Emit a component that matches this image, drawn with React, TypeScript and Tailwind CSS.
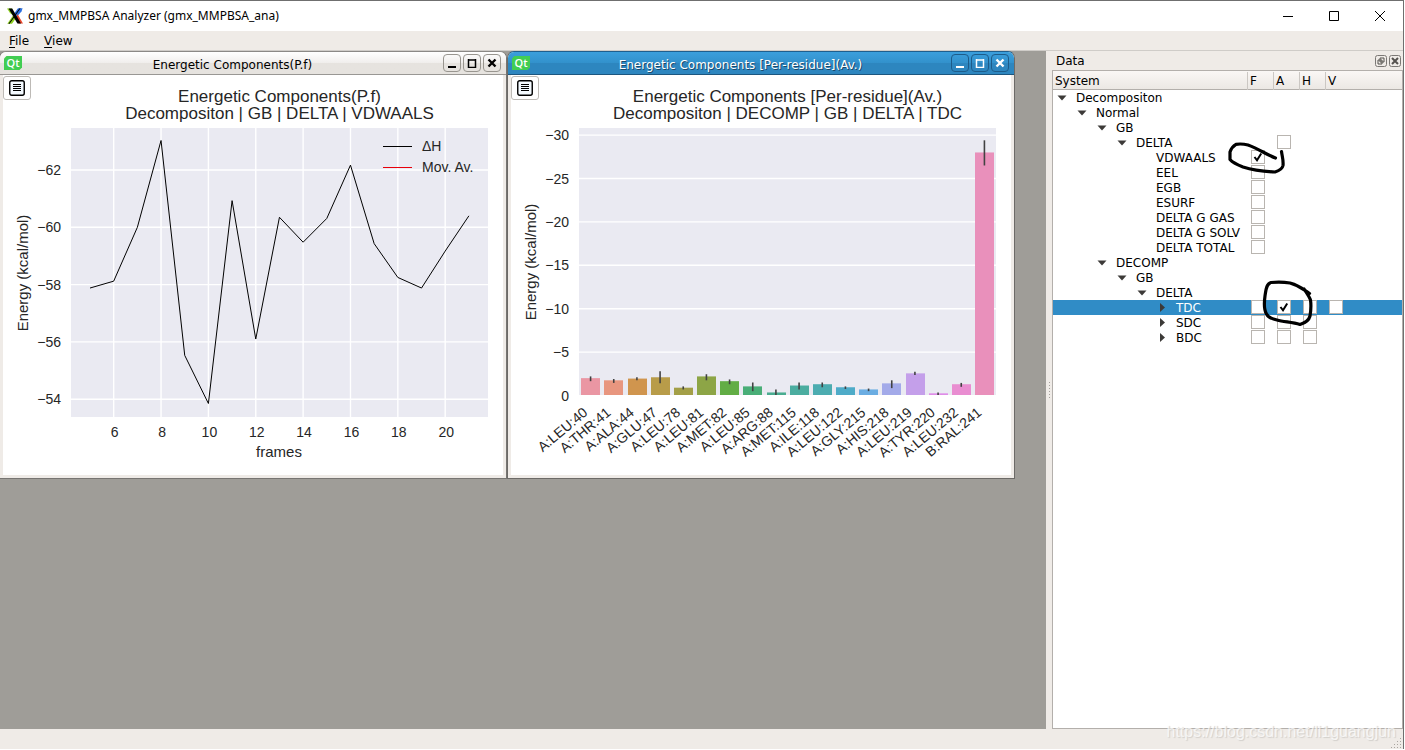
import React from 'react';

interface TreeRow {
  label: string;
  level: number;
  state: 'open' | 'closed' | 'leaf';
  checks: string;
  checked?: string;
  selected?: boolean;
}

interface ResidueBar {
  name: string;
  value: number;
  low: number;
  high: number;
  color: string;
}

const COLUMNS = ['F', 'A', 'H', 'V'];

const TREE_ROWS: TreeRow[] = [
  { label: 'Decompositon', level: 0, state: 'open', checks: '' },
  { label: 'Normal', level: 1, state: 'open', checks: '' },
  { label: 'GB', level: 2, state: 'open', checks: '' },
  { label: 'DELTA', level: 3, state: 'open', checks: 'A' },
  { label: 'VDWAALS', level: 4, state: 'leaf', checks: 'F', checked: 'F' },
  { label: 'EEL', level: 4, state: 'leaf', checks: 'F' },
  { label: 'EGB', level: 4, state: 'leaf', checks: 'F' },
  { label: 'ESURF', level: 4, state: 'leaf', checks: 'F' },
  { label: 'DELTA G GAS', level: 4, state: 'leaf', checks: 'F' },
  { label: 'DELTA G SOLV', level: 4, state: 'leaf', checks: 'F' },
  { label: 'DELTA TOTAL', level: 4, state: 'leaf', checks: 'F' },
  { label: 'DECOMP', level: 2, state: 'open', checks: '' },
  { label: 'GB', level: 3, state: 'open', checks: '' },
  { label: 'DELTA', level: 4, state: 'open', checks: '' },
  { label: 'TDC', level: 5, state: 'closed', checks: 'FAHV', checked: 'A', selected: true },
  { label: 'SDC', level: 5, state: 'closed', checks: 'FAH' },
  { label: 'BDC', level: 5, state: 'closed', checks: 'FAH' },
];

const INDENT = ['pl-[4px]', 'pl-[24px]', 'pl-[44px]', 'pl-[64px]', 'pl-[84px]', 'pl-[104px]'];

// Energy per frame, starting at frame 5
const FRAME_START = 5;
const ENERGIES = [
  -57.88, -58.12, -60.0, -63.03, -55.53, -53.85, -60.93, -56.1, -60.35,
  -59.48, -60.31, -62.17, -59.43, -58.25, -57.88, -59.17, -60.4,
];

const RESIDUES: ResidueBar[] = [
  { name: 'A:LEU:40', value: 2.0, low: 1.65, high: 2.2, color: '#ea96a3' },
  { name: 'A:THR:41', value: 1.75, low: 1.45, high: 1.9, color: '#e8967f' },
  { name: 'A:ALA:44', value: 1.95, low: 1.75, high: 2.1, color: '#d0954e' },
  { name: 'A:GLU:47', value: 2.1, low: 1.4, high: 2.8, color: '#b89c49' },
  { name: 'A:LEU:78', value: 0.9, low: 0.7, high: 1.05, color: '#a39f47' },
  { name: 'A:LEU:81', value: 2.2, low: 1.75, high: 2.45, color: '#8da546' },
  { name: 'A:MET:82', value: 1.65, low: 1.3, high: 1.85, color: '#62ad45' },
  { name: 'A:LEU:85', value: 1.05, low: 0.5, high: 1.5, color: '#49ae77' },
  { name: 'A:ARG:88', value: 0.35, low: 0.05, high: 0.7, color: '#4aad91' },
  { name: 'A:MET:115', value: 1.15, low: 0.7, high: 1.5, color: '#4bada0' },
  { name: 'A:ILE:118', value: 1.3, low: 0.95, high: 1.5, color: '#4cacb0' },
  { name: 'A:LEU:122', value: 0.95, low: 0.75, high: 1.05, color: '#4eabc8' },
  { name: 'A:GLY:215', value: 0.7, low: 0.5, high: 0.8, color: '#6bade2' },
  { name: 'A:HIS:218', value: 1.4, low: 0.85, high: 1.75, color: '#a3aae9' },
  { name: 'A:LEU:219', value: 2.55, low: 2.35, high: 2.75, color: '#c49fea' },
  { name: 'A:TYR:220', value: 0.25, low: 0.05, high: 0.35, color: '#df8de8' },
  { name: 'A:LEU:232', value: 1.3, low: 1.0, high: 1.45, color: '#e98dd1' },
  { name: 'B:RAL:241', value: 28.0, low: 26.5, high: 29.4, color: '#e990bb' },
];

const frameX = (frame: number) => 87 + (frame - FRAME_START) * 23.68;
const energyY = (energy: number) => 95 + (energy + 62) * 28.65;
const residueY = (value: number) => 320.5 - value * 8.68;

const XLogo = () => (
  <svg viewBox="0 0 16 16" className="h-4 w-4" aria-hidden="true">
    <path d="M0 0.5h5L7 8 3 5z" fill="#8ed11f" />
    <path d="M15.600 0.300h-4.600L7.500 5l2.500 3.500 4.500-5z" fill="#2b6fe0" />
    <path d="M9 10l1.500-4L16 15.500h-4.500z" fill="#e8452a" />
    <path d="M0.300 15.700h4.700l3.500-5L6 7.600z" fill="#8ed11f" />
    <path d="M1.600 0.400h3.600l8.800 15.200h-3.600z" fill="#000" />
    <path d="M13.600 0.300h-1L1.400 15.700h1.200z" fill="#000" />
  </svg>
);

const QtLogo = () => (
  <svg viewBox="0 0 18 14" className="h-[14px] w-[18px] shrink-0" aria-hidden="true">
    <path d="M2.5 0H18v11.5L15.5 14H0V2.5z" fill="#41cd52" />
    <text x="9" y="11" textAnchor="middle" fontSize="11" fontWeight="600" fill="#fff" fontFamily="Open Sans, sans-serif">
      Qt
    </text>
  </svg>
);

const TitleBar = () => (
  <header className="flex h-[30px] shrink-0 items-center bg-white">
    <div className="flex flex-1 items-center gap-[5px] pl-[7px]">
      <XLogo />
      <h1 className="font-['Noto_Sans',sans-serif] text-[12px] leading-4">
        gmx_MMPBSA Analyzer (gmx_MMPBSA_ana)
      </h1>
    </div>
    {[
      { label: 'Minimize', d: 'M0 5.5h10' },
      { label: 'Maximize', d: 'M0.5 0.5h9v9h-9z' },
      { label: 'Close', d: 'M0 0l10 10M10 0L0 10' },
    ].map((item) => (
      <button key={item.label} aria-label={item.label} className="flex h-full w-[46px] items-center justify-center">
        <svg viewBox="0 0 10 10" className="h-[10px] w-[10px]" fill="none" stroke="#000">
          <path d={item.d} />
        </svg>
      </button>
    ))}
  </header>
);

const MenuBar = () => (
  <nav className="flex h-5 shrink-0 items-center gap-[15px] border-b border-[#cfccc8] bg-[#efebe7] pl-[9px] text-[12px]">
    <button>
      <span className="underline underline-offset-2">F</span>ile
    </button>
    <button>
      <span className="underline underline-offset-2">V</span>iew
    </button>
  </nav>
);

interface SubWindowProps {
  title: string;
  active?: boolean;
  className: string;
  children: React.ReactNode;
}

const SubWindow: React.FC<SubWindowProps> = ({ title, active, className, children }) => (
  <section
    className={`absolute top-0 w-[508px] rounded-t-[7px] border bg-[#efebe7] ${
      active ? 'border-[#6c6a67] border-t-[#1f5f8e]' : 'border-[#777572] border-t-[#8b8986]'
    } ${className}`}
  >
    <div
      className={`flex h-[23px] items-center rounded-t-[6px] border-b pr-[5px] pl-1 ${
        active
          ? 'border-[#1c567f] bg-linear-to-b from-[#3b9fdc] from-0% via-[#3291cc] via-50% to-[#2d86bf] to-50% text-white'
          : 'border-[#999794] bg-linear-to-b from-[#ffffff] from-0% via-[#f0eeec] via-50% to-[#e6e3df] to-50% text-black'
      }`}
    >
      <QtLogo />
      <h2
        className={`flex-1 pt-1 text-center text-[12px] leading-4 ${
          active ? '[text-shadow:1px_1px_0_#1c4a6b]' : ''
        }`}
      >
        {title}
      </h2>
      <div className="flex gap-[2px]">
        {[
          { label: 'Minimize window', d: 'M1 9h8', width: 2 },
          { label: 'Maximize window', d: 'M1.5 1v8.5h7V1M1 2h8', width: 1.5 },
          { label: 'Close window', d: 'M1.5 1.5l7 7M8.5 1.5l-7 7', width: 2.4 },
        ].map((item) => (
          <button
            key={item.label}
            aria-label={item.label}
            className={`flex h-[18px] w-[18px] items-center justify-center rounded-[4px] border ${
              active ? 'border-[#1d5c8a]' : 'border-[#98958f]'
            }`}
          >
            <svg viewBox="0 0 10 10" className="h-[10px] w-[10px]" fill="none" stroke="currentColor" strokeWidth={item.width}>
              <path d={item.d} />
            </svg>
          </button>
        ))}
      </div>
    </div>
    <div className="relative mx-[3px] mb-[3px] bg-white">
      <button
        aria-label="Chart options"
        className="absolute top-px left-0 flex h-6 w-7 items-center justify-center rounded-[3px] border border-[#bdbab6] bg-white"
      >
        <svg viewBox="0 0 16 16" className="h-4 w-4">
          <rect x="0.75" y="0.75" width="14.5" height="14.5" rx="2" fill="#f4faff" stroke="#000" strokeWidth="1.4" />
          <path d="M4 4.5h8M4 6.5h8M4 8.5h8M4 10.5h8" stroke="#000" strokeWidth="1.2" />
        </svg>
      </button>
      {children}
    </div>
  </section>
);

const chartClass = "block w-full font-['Liberation_Sans',Arial,sans-serif]";

const ChartTitle = ({ lines }: { lines: string[] }) => (
  <g fontSize="17" textAnchor="middle">
    <text x="276.5" y="27">{lines[0]}</text>
    <text x="276.5" y="44">{lines[1]}</text>
  </g>
);

const LineChart = () => (
  <svg viewBox="0 0 500 400" className={chartClass} fill="#262626">
    <ChartTitle lines={['Energetic Components(P.f)', 'Decompositon | GB | DELTA | VDWAALS']} />
    <rect x="68" y="53" width="417" height="289" fill="#eaeaf2" />
    {[6, 8, 10, 12, 14, 16, 18, 20].map((frame) => (
      <g key={frame}>
        <path d={`M${frameX(frame)} 53V342`} stroke="#fff" strokeWidth="1.4" />
        <text x={frameX(frame) + 1} y="362" fontSize="14" textAnchor="middle">{frame}</text>
      </g>
    ))}
    {[-62, -60, -58, -56, -54].map((tick) => (
      <g key={tick}>
        <path d={`M68 ${energyY(tick)}H485`} stroke="#fff" strokeWidth="1.4" />
        <text x="58" y={energyY(tick) + 5} fontSize="14" textAnchor="end">{`−${-tick}`}</text>
      </g>
    ))}
    <polyline
      points={ENERGIES.map((energy, i) => `${frameX(FRAME_START + i)},${energyY(energy)}`).join(' ')}
      fill="none"
      stroke="#000"
    />
    <path d="M380 71.5h29" stroke="#000" />
    <path d="M380 92.5h29" stroke="#e8000b" />
    <text x="419" y="76" fontSize="14">ΔH</text>
    <text x="419" y="97" fontSize="14">Mov. Av.</text>
    <text x="276" y="382" fontSize="15" textAnchor="middle">frames</text>
    <text transform="translate(25 198) rotate(-90)" fontSize="15" textAnchor="middle">Energy (kcal/mol)</text>
  </svg>
);

const BarChart = () => {
  const step = 417 / RESIDUES.length;
  return (
    <svg viewBox="0 0 500 400" className={chartClass} fill="#262626">
      <ChartTitle lines={['Energetic Components [Per-residue](Av.)', 'Decompositon | DECOMP | GB | DELTA | TDC']} />
      <rect x="68" y="53" width="417" height="267" fill="#eaeaf2" />
      {[0, 5, 10, 15, 20, 25, 30].map((tick) => (
        <g key={tick}>
          {tick > 0 && <path d={`M68 ${residueY(tick)}H485`} stroke="#fff" strokeWidth="1.4" />}
          <text x="58" y={residueY(tick) + 5} fontSize="14" textAnchor="end">
            {tick > 0 ? `−${tick}` : '0'}
          </text>
        </g>
      ))}
      {RESIDUES.map((bar, i) => {
        const center = 68 + step * (i + 0.5);
        return (
          <g key={bar.name}>
            <rect
              x={Math.round(center - 9.3)}
              y={residueY(bar.value)}
              width="19"
              height={320 - residueY(bar.value)}
              fill={bar.color}
            />
            <path d={`M${center} ${residueY(bar.low)}V${residueY(bar.high)}`} stroke="#424242" strokeWidth="1.6" />
            <text transform={`translate(${center - 2} 339) rotate(-40)`} fontSize="14" textAnchor="end">
              {bar.name}
            </text>
          </g>
        );
      })}
      <text transform="translate(25 187) rotate(-90)" fontSize="15" textAnchor="middle">Energy (kcal/mol)</text>
    </svg>
  );
};

const CheckBox = ({ label, checked }: { label: string; checked: boolean }) => (
  <label className="relative ml-[3px] block h-[14px] w-[14px]">
    <input
      type="checkbox"
      aria-label={label}
      defaultChecked={checked}
      className="peer block h-[14px] w-[14px] appearance-none border border-[#b9b5b0] bg-white"
    />
    <svg
      viewBox="0 0 14 14"
      className="pointer-events-none absolute inset-0 hidden h-[14px] w-[14px] peer-checked:block"
      fill="none"
      stroke="#000"
      strokeWidth="2"
    >
      <path d="M3.5 7l2.500 3.300L10.200 3.400" />
    </svg>
  </label>
);

const Expander = ({ state }: { state: TreeRow['state'] }) => (
  <svg viewBox="0 0 10 10" className="h-[10px] w-[10px] shrink-0" fill="#3c3a38" aria-hidden="true">
    {state === 'open' && <path d="M0.5 2.5h9L5 7.5z" />}
    {state === 'closed' && <path d="M3 0v9L8 4.5z" />}
  </svg>
);

// Hand drawn circles round the two ticked boxes
const Annotations = () => (
  <svg
    viewBox="1225 136 100 195"
    className="pointer-events-none absolute top-[65px] left-[172px] h-[195px] w-[100px]"
    fill="none"
    stroke="#000"
    strokeWidth="3.2"
    strokeLinecap="round"
    strokeLinejoin="round"
    aria-hidden="true"
  >
    <path d="M1275.5 158C1267 155 1258 148.5 1248 145Q1242 143.5 1236 144.3C1233 146 1231 149 1230 152V159.5C1233 163 1238 165 1243 167 1254 170.5 1264 171.5 1275 172Q1282 170 1283 165.5C1283.6 160 1282 156 1281.5 151.5" />
    <path d="M1309.5 293.5C1304 290 1301 286 1290 283Q1281 281.5 1271 282.5C1266 284 1266 290 1265 296 1264 303 1263.5 309 1266.5 314 1268 317 1272 319 1277 320 1284 322 1292 322 1300 324.5 1305 323 1309 320 1310 316Q1311.5 307 1310.5 300C1309 296 1306 292 1304 289" />
  </svg>
);

const DataDock = () => (
  <aside className="flex w-[351px] shrink-0 flex-col">
    <div className="flex h-[19px] items-center pr-[2px] pl-1 text-[12px]">
      <h2 className="flex-1">Data</h2>
      <div className="flex gap-[2px]">
        {[
          { label: 'Float panel', d: 'M5 3h4v4H5zM3 5h4v4H3z', width: 1 },
          { label: 'Close panel', d: 'M3 3l6 6M9 3l-6 6', width: 2 },
        ].map((item) => (
          <button key={item.label} aria-label={item.label}>
            <svg viewBox="0 0 12 12" className="h-3 w-3" fill="none" stroke="#55524f" strokeWidth={item.width}>
              <rect x="0.5" y="0.5" width="11" height="11" rx="2" strokeWidth="1" stroke="#7b7875" />
              <path d={item.d} />
            </svg>
          </button>
        ))}
      </div>
    </div>
    <div className="relative flex-1 border border-[#b3afab] bg-white">
      <table className="w-full table-fixed border-collapse text-[12px] leading-[15px]">
        <thead>
          <tr className="h-[19px] bg-linear-to-b from-[#faf7f5] to-[#ebe7e3] shadow-[inset_0_-1px_0_#b3afab]">
            <th className="w-[195px] p-0 text-left font-normal">
              <div className="h-[18px] border-r border-[#cbc7c3] pt-[2px] pl-[2px]">System</div>
            </th>
            {COLUMNS.map((column) => (
              <th key={column} className={`p-0 text-left font-normal ${column === 'V' ? '' : 'w-[26px]'}`}>
                <div className={`h-[18px] pt-[2px] pl-[2px] ${column === 'V' ? '' : 'border-r border-[#cbc7c3]'}`}>
                  {column}
                </div>
              </th>
            ))}
          </tr>
        </thead>
        <tbody>
          {TREE_ROWS.map((row, index) => (
            <tr key={index} className={`h-[15px] ${row.selected ? 'bg-[#308cc6] text-white' : 'text-black'}`}>
              <td className="p-0">
                <div className={`flex h-[15px] items-center gap-[9px] whitespace-nowrap ${INDENT[row.level]}`}>
                  <Expander state={row.state} />
                  <span className="pt-[2px]">{row.label}</span>
                </div>
              </td>
              {COLUMNS.map((column) => (
                <td key={column} className="p-0 align-top">
                  {row.checks.includes(column) && (
                    <CheckBox label={`${row.label} ${column}`} checked={row.checked === column} />
                  )}
                </td>
              ))}
            </tr>
          ))}
        </tbody>
      </table>
      <Annotations />
    </div>
  </aside>
);

const StatusBar = () => (
  <footer className="relative h-5 shrink-0 bg-[#efebe7]">
    <span className="absolute right-[7px] bottom-[7px] font-['Liberation_Sans',Arial,sans-serif] text-[16px] leading-5 text-white/70 [text-shadow:1px_1px_1px_#d2cfcb]">
      https://blog.csdn.net/li1guangjun
    </span>
    <svg viewBox="0 0 12 12" className="absolute right-px bottom-0 h-3 w-3" fill="#aaa6a1" aria-hidden="true">
      {[0, 1, 2, 3].map((row) =>
        Array.from({ length: row + 1 }, (_, i) => (
          <rect key={`${row}-${i}`} x={10 - i * 3} y={1 + row * 3} width="1" height="1" />
        )),
      )}
    </svg>
  </footer>
);

export default function App() {
  return (
    <div className="h-screen bg-white pr-px pb-px">
      <div className="flex h-full flex-col border-t border-r border-[#6f6f6f] bg-[#efebe7] font-['DejaVu_Sans',sans-serif] text-black">
        <TitleBar />
        <MenuBar />
        <div className="flex min-h-0 flex-1">
          <main className="relative flex-1 overflow-hidden bg-[#9f9d98]">
            <SubWindow title="Energetic Components(P.f)" className="left-[-1px]">
              <LineChart />
            </SubWindow>
            <SubWindow title="Energetic Components [Per-residue](Av.)" active className="left-[507px]">
              <BarChart />
            </SubWindow>
          </main>
          <div className="flex w-[6px] shrink-0 flex-col items-center justify-center gap-[2px]">
            {[0, 1, 2, 3, 4, 5].map((dot) => (
              <span key={dot} className="h-px w-px bg-[#a5a19c]" />
            ))}
          </div>
          <DataDock />
        </div>
        <StatusBar />
      </div>
    </div>
  );
}
